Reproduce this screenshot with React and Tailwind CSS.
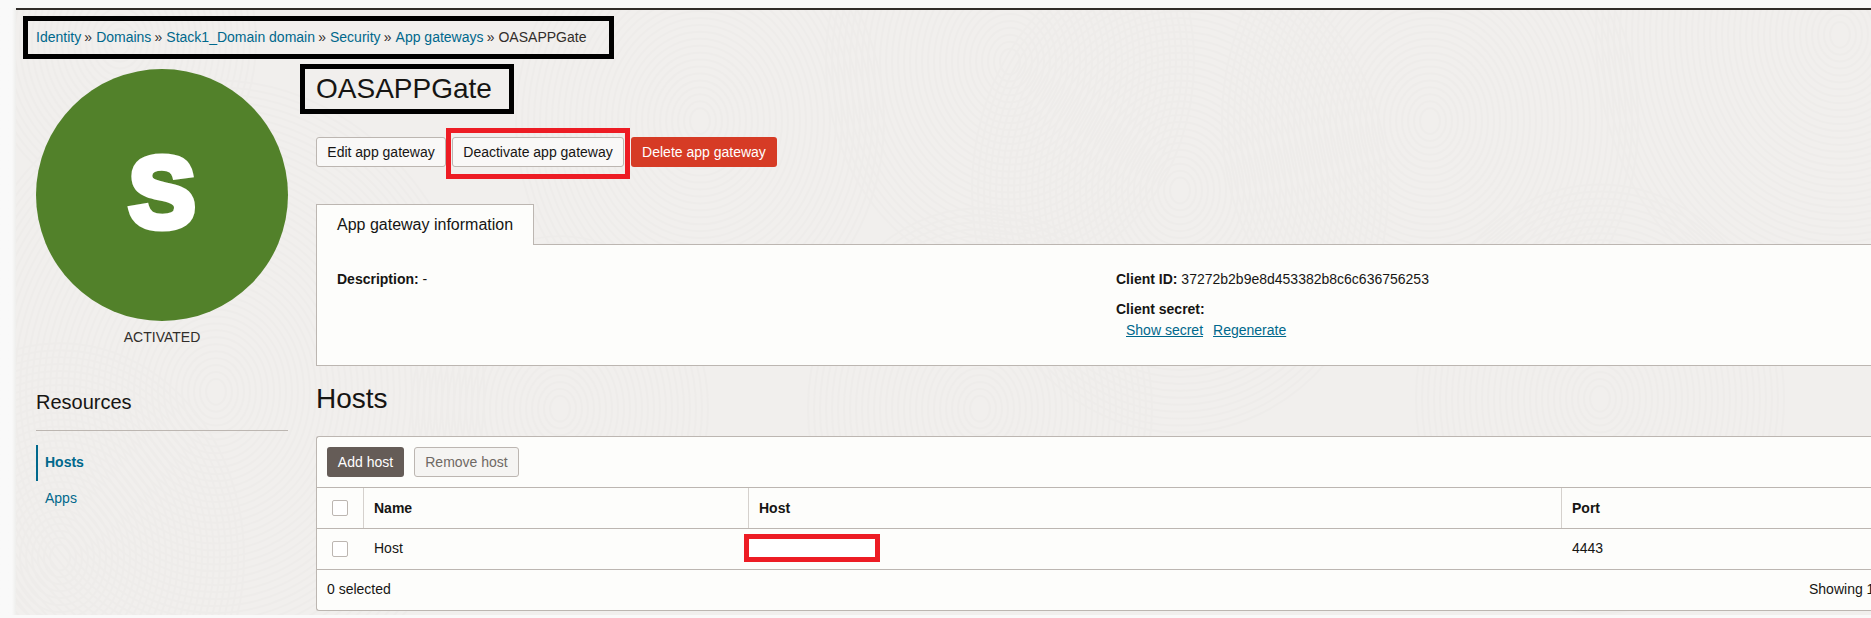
import React from "react";

const crumbs = ["Identity", "Domains", "Stack1_Domain domain", "Security", "App gateways"];

const swirls = [
    [216, 393, 44], [60, 560, 30], [1840, 33, 40], [1180, 190, 34], [700, 120, 30],
    [1430, 120, 34], [980, 410, 28], [560, 410, 24], [1600, 400, 30], [120, 40, 22], [1010, 60, 30],
];

const Texture = () => (
    <svg className="absolute inset-0 w-full h-full pointer-events-none" viewBox="0 0 1855 610" preserveAspectRatio="none">
        {swirls.map(([cx, cy, n], i) =>
            Array.from({ length: n }).map((_, j) => (
                <ellipse
                    key={`${i}-${j}`}
                    cx={cx - 16}
                    cy={cy - 8}
                    rx={10 + j * 6}
                    ry={13 + j * 7}
                    fill="none"
                    stroke="#eeecea"
                    strokeWidth="2"
                />
            ))
        )}
    </svg>
);

const Checkbox = () => (
    <div className="w-4 h-4 rounded-[2px] border border-[#bcb6b1] bg-white"></div>
);

const App = () => {
    return (
        <div className="w-[1871px] h-[618px] overflow-hidden flex flex-col bg-[#f9f9f9] text-[14px] text-[#161513] font-['Liberation_Sans',Arial,sans-serif]">
            <div className="h-2 shrink-0"></div>
            <div className="flex-1 min-h-0 flex">
                <div className="w-[16px] shrink-0 bg-gradient-to-r from-[#f9f9f9] from-75% to-[#eeeeec]"></div>
                <div className="relative flex-1 min-w-0 border-t-2 border-[#312d2a] bg-[#f1efed] overflow-hidden">
                    <Texture />
                    <div className="relative">
                        <div className="ml-[7px] mt-[6px] w-[591px] h-[43px] border-[5px] border-black pl-[8px] flex items-center whitespace-nowrap">
                            {crumbs.map((c) => (
                                <React.Fragment key={c}>
                                    <span className="text-[#00688c]">{c}</span>
                                    <span className="pl-[3.2px] pr-1 text-[#312d2a]">»</span>
                                </React.Fragment>
                            ))}
                            <span className="text-[#312d2a]">OASAPPGate</span>
                        </div>

                        <div className="flex mt-[5px]">
                            <div className="ml-[20px] w-[252px] shrink-0 pt-[5px]">
                                <div className="w-[252px] h-[252px] rounded-full bg-[#52812a] flex items-center justify-center pb-[6px]">
                                    <span className="text-white font-bold text-[100px] leading-none [-webkit-text-stroke:7px_white]">S</span>
                                </div>
                                <div className="text-center mt-[8px] leading-[16px] text-[#312d2a]">ACTIVATED</div>
                                <div className="mt-[43px] text-[20px] leading-[28px] pb-[14px] border-b border-[#bcb6b1]">Resources</div>
                                <div className="mt-[14px] h-9 border-l-2 border-[#00688c] pl-[7px] pb-px flex items-center font-bold text-[#00688c]">Hosts</div>
                                <div className="h-[34px] pl-[9px] flex items-center text-[#00688c]">Apps</div>
                            </div>

                            <div className="ml-[12px] flex-1 min-w-0">
                                <div className="w-[214px] h-[50px] border-[5px] border-black pl-[11px] flex items-center text-[28px]">OASAPPGate</div>
                                <div className="pl-[16px]">
                                    <div className="mt-[23px] flex h-[30px]">
                                        <button className="w-[130px] rounded-[3px] border border-[#bcb6b1] bg-[#f9f8f7]">Edit app gateway</button>
                                        <button className="relative ml-[6px] w-[172px] rounded-[3px] border border-[#bcb6b1] bg-[#f9f8f7]">
                                            Deactivate app gateway
                                            <span className="absolute -left-[7px] -right-[7px] -top-[10px] -bottom-[13px] border-[5px] border-[#ed1c24]"></span>
                                        </button>
                                        <button className="ml-[7px] w-[146px] rounded-[3px] bg-[#d63b25] text-white">Delete app gateway</button>
                                    </div>

                                    <div className="mt-[37px] relative z-10 w-[218px] h-[41px] border border-b-0 border-[#bcb6b1] bg-[#fdfdfb] pl-[20px] pb-px flex items-center text-[16px]">App gateway information</div>
                                    <div className="-mt-px h-[122px] border border-r-0 border-[#bcb6b1] bg-[#fdfdfb] pl-[20px] pt-[24px] flex">
                                        <div className="w-[779px] leading-[20px]"><b>Description:</b> -</div>
                                        <div className="leading-[20px]">
                                            <div><b>Client ID:</b> 37272b2b9e8d453382b8c6c636756253</div>
                                            <div className="mt-[10px] font-bold">Client secret:</div>
                                            <div className="mt-px pl-[10px] flex gap-[10px] text-[#00688c] underline">
                                                <span>Show secret</span>
                                                <span>Regenerate</span>
                                            </div>
                                        </div>
                                    </div>

                                    <div className="mt-[17px] text-[28px] leading-[32px]">Hosts</div>
                                    <div className="mt-[21px] border border-r-0 border-[#bcb6b1] rounded-l-[3px] bg-[#fdfdfb]">
                                        <div className="h-[50px] px-[10px] flex items-center gap-[10px]">
                                            <button className="w-[77px] h-[30px] rounded-[3px] bg-[#655c57] text-white">Add host</button>
                                            <button className="w-[105px] h-[30px] rounded-[3px] border border-[#bcb6b1] bg-[#f5f4f2] text-[#6f6964]">Remove host</button>
                                        </div>
                                        <div className="h-[41px] flex items-stretch border-t border-[#bcb6b1] font-bold">
                                            <div className="w-[47px] shrink-0 border-r border-[#d5d1cd] flex items-center pl-[15px]"><Checkbox /></div>
                                            <div className="w-[385px] shrink-0 border-r border-[#d5d1cd] pl-[10px] flex items-center">Name</div>
                                            <div className="w-[813px] shrink-0 border-r border-[#d5d1cd] pl-[10px] flex items-center">Host</div>
                                            <div className="pl-[10px] flex items-center">Port</div>
                                        </div>
                                        <div className="h-[41px] flex items-stretch border-t border-[#bcb6b1]">
                                            <div className="w-[47px] shrink-0 flex items-center pl-[15px]"><Checkbox /></div>
                                            <div className="w-[385px] shrink-0 pl-[10px] pb-[2px] flex items-center">Host</div>
                                            <div className="w-[813px] shrink-0 pl-[10px] flex items-center relative">
                                                <span className="absolute left-[-5px] top-[5px] w-[136px] h-[28px] border-[5px] border-[#ed1c24] bg-white"></span>
                                            </div>
                                            <div className="pl-[10px] pb-px flex items-center">4443</div>
                                        </div>
                                        <div className="h-[41px] flex items-center justify-between border-t border-[#bcb6b1] pl-[10px] pb-[2px]">
                                            <span>0 selected</span>
                                            <span className="w-[62px] overflow-hidden whitespace-nowrap">Showing 1</span>
                                        </div>
                                    </div>
                                </div>
                            </div>
                        </div>
                    </div>
                </div>
            </div>
            <div className="h-[3px] shrink-0"></div>
        </div>
    );
};

export default App;
